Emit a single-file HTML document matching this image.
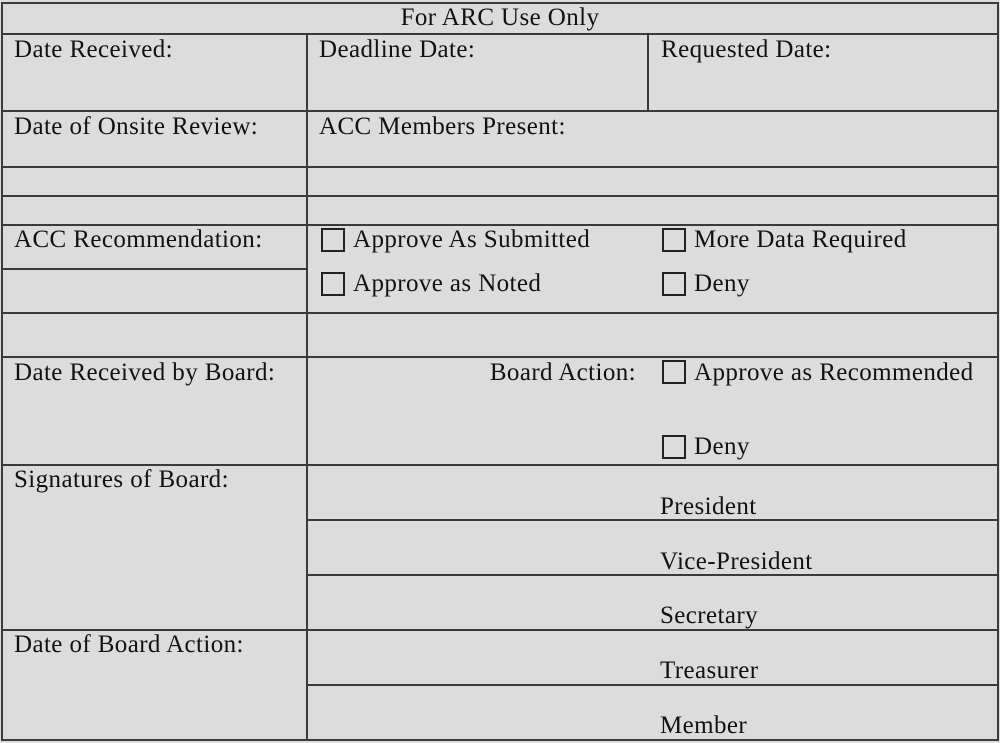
<!DOCTYPE html>
<html><head><meta charset="utf-8"><style>
html,body{margin:0;padding:0;width:1000px;height:743px;background:#fff;overflow:hidden}
#f{position:absolute;left:0;top:0;width:1000px;height:743px;background:#dcdcdc}
.h{position:absolute;height:2px;background:#3a3a3a}
.v{position:absolute;width:2px;background:#3a3a3a}
.t{position:absolute;font-family:"Liberation Serif",serif;font-size:25px;letter-spacing:0.4px;line-height:23px;color:#111;white-space:nowrap}
.b{position:absolute;width:20px;height:20px;border:2px solid #222}
</style></head><body><div id="f">
<div class="h" style="left:1px;top:2px;width:998px"></div>
<div class="h" style="left:1px;top:33px;width:998px"></div>
<div class="h" style="left:1px;top:110px;width:998px"></div>
<div class="h" style="left:1px;top:166px;width:998px"></div>
<div class="h" style="left:1px;top:195px;width:998px"></div>
<div class="h" style="left:1px;top:224px;width:998px"></div>
<div class="h" style="left:1px;top:268px;width:306px"></div>
<div class="h" style="left:1px;top:312px;width:998px"></div>
<div class="h" style="left:1px;top:356px;width:998px"></div>
<div class="h" style="left:1px;top:464px;width:998px"></div>
<div class="h" style="left:307px;top:519px;width:692px"></div>
<div class="h" style="left:307px;top:574px;width:692px"></div>
<div class="h" style="left:1px;top:629px;width:998px"></div>
<div class="h" style="left:307px;top:684px;width:692px"></div>
<div class="h" style="left:1px;top:739px;width:998px"></div>
<div class="v" style="left:1px;top:2px;height:739px"></div>
<div class="v" style="left:997px;top:2px;height:739px"></div>
<div class="v" style="left:306px;top:33px;height:708px"></div>
<div class="v" style="left:647px;top:33px;height:79px"></div>

<div class="t" style="left:0;width:1000px;text-align:center;top:6px">For ARC Use Only</div>
<div class="t" style="left:14px;top:38px">Date Received:</div>
<div class="t" style="left:319px;top:38px">Deadline Date:</div>
<div class="t" style="left:661px;top:38px">Requested Date:</div>
<div class="t" style="left:14px;top:115px">Date of Onsite Review:</div>
<div class="t" style="left:319px;top:115px">ACC Members Present:</div>
<div class="t" style="left:14px;top:228px">ACC Recommendation:</div>
<div class="b" style="left:321px;top:228px"></div>
<div class="t" style="left:353px;top:228px">Approve As Submitted</div>
<div class="b" style="left:662px;top:228px"></div>
<div class="t" style="left:694px;top:228px">More Data Required</div>
<div class="b" style="left:321px;top:272px"></div>
<div class="t" style="left:353px;top:272px">Approve as Noted</div>
<div class="b" style="left:662px;top:272px"></div>
<div class="t" style="left:694px;top:272px">Deny</div>
<div class="t" style="left:14px;top:361px">Date Received by Board:</div>
<div class="t" style="left:307px;width:329px;text-align:right;top:361px">Board Action:</div>
<div class="b" style="left:662px;top:360px"></div>
<div class="t" style="left:694px;top:361px">Approve as Recommended</div>
<div class="b" style="left:662px;top:435px"></div>
<div class="t" style="left:694px;top:435px">Deny</div>
<div class="t" style="left:14px;top:468px">Signatures of Board:</div>
<div class="t" style="left:660px;top:495px">President</div>
<div class="t" style="left:660px;top:550px">Vice-President</div>
<div class="t" style="left:660px;top:604px">Secretary</div>
<div class="t" style="left:14px;top:633px">Date of Board Action:</div>
<div class="t" style="left:660px;top:659px">Treasurer</div>
<div class="t" style="left:660px;top:714px">Member</div>
</div></body></html>
